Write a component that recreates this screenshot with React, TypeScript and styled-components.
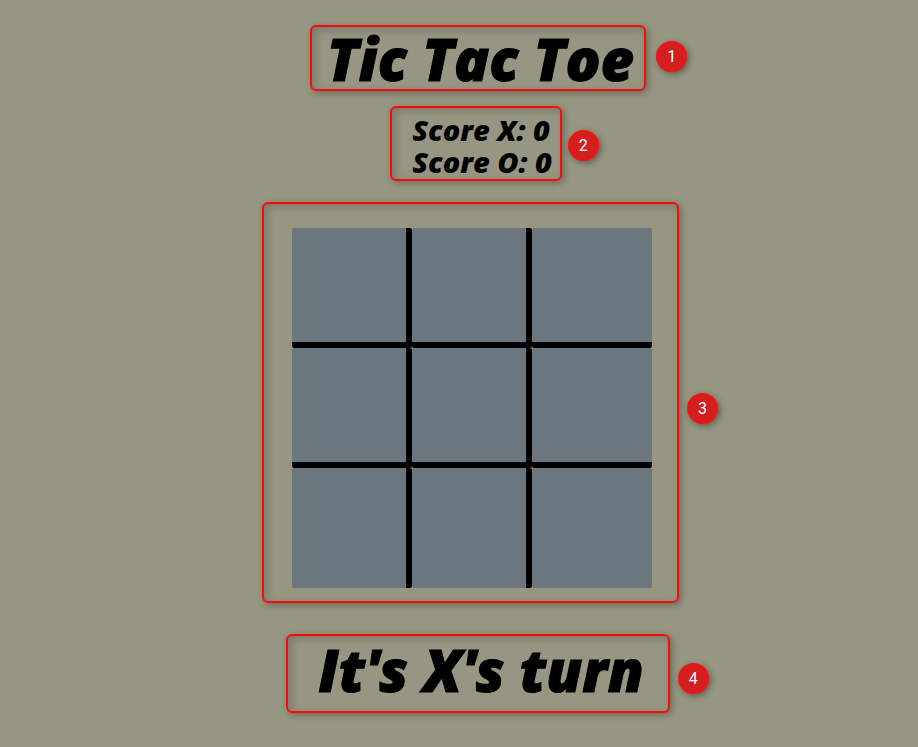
import React, { useState } from "react";
import styled, { createGlobalStyle } from "styled-components";

const GlobalStyle = createGlobalStyle`
  *, *::before, *::after { box-sizing: border-box; }
  body {
    margin: 0;
    background: #979682;
    color: #000;
    font-family: "Open Sans", "Noto Sans", sans-serif;
  }
`;

const Game = styled.main`
  display: flex;
  flex-direction: column;
  align-items: center;
  min-height: 100vh;
  padding: 25px 0 32px 38px;
`;

const Frame = styled.section<{ $pad: string; $after?: number; $shift?: number }>`
  position: relative;
  padding: ${(p) => p.$pad};
  margin-bottom: ${(p) => p.$after ?? 0}px;
  margin-right: ${(p) => p.$shift ?? 0}px;
  border: 2px solid #fb0a0a;
  border-radius: 6px;
  box-shadow: 2px 2px 7px rgba(0, 0, 0, 0.3), inset 3px 3px 8px rgba(0, 0, 0, 0.2);
`;

const Badge = styled.span<{ $top: number; $gap?: number }>`
  position: absolute;
  top: ${(p) => p.$top}px;
  left: calc(100% + ${(p) => p.$gap ?? 10}px);
  display: flex;
  align-items: center;
  justify-content: center;
  width: 31px;
  height: 31px;
  border: 2px solid #f51111;
  border-radius: 50%;
  background: #d31f1f;
  color: #fff;
  font: 400 16px/20px Roboto, sans-serif;
  box-shadow: 2px 2px 6px rgba(0, 0, 0, 0.4);
`;

const Display = styled.h1`
  margin: 0;
  font-size: 58px;
  font-style: italic;
  font-weight: 800;
  line-height: 60px;
  white-space: nowrap;
  -webkit-text-stroke: 1px #000;
`;

const Turn = styled(Display)`
  line-height: 67px;
`;

const Score = styled.p`
  margin: 0;
  font-size: 29px;
  font-style: italic;
  font-weight: 800;
  line-height: 32px;
  white-space: nowrap;
`;

const Board = styled.div`
  display: grid;
  grid-template-columns: repeat(3, 120px);
  grid-auto-rows: 120px;
`;

const Cell = styled.button<{ $right: boolean; $bottom: boolean }>`
  padding: 0;
  border: 0 solid #000;
  border-right-width: ${(p) => (p.$right ? 6 : 0)}px;
  border-bottom-width: ${(p) => (p.$bottom ? 6 : 0)}px;
  border-radius: 2px;
  background: #6c767e;
  color: #000;
  font: italic 800 72px/1 "Open Sans", sans-serif;
  cursor: pointer;
`;

const LINES = [
  [0, 1, 2], [3, 4, 5], [6, 7, 8],
  [0, 3, 6], [1, 4, 7], [2, 5, 8],
  [0, 4, 8], [2, 4, 6],
];

const EMPTY: string[] = Array(9).fill("");

export default function App() {
  const [cells, setCells] = useState(EMPTY);
  const [player, setPlayer] = useState("X");
  const [score, setScore] = useState<Record<string, number>>({ X: 0, O: 0 });

  const play = (index: number) => {
    if (cells[index]) return;
    const next = cells.map((c, i) => (i === index ? player : c));
    const won = LINES.some((line) => line.every((i) => next[i] === player));
    if (won) setScore({ ...score, [player]: score[player] + 1 });
    setCells(won || next.every(Boolean) ? EMPTY : next);
    setPlayer(player === "X" ? "O" : "X");
  };

  return (
    <>
      <GlobalStyle />
      <Game>
        <Frame $pad="2px 10px 0 15px" $after={15}>
          <Display>Tic Tac Toe</Display>
          <Badge $top={14} $gap={12}>1</Badge>
        </Frame>
        <Frame $pad="6px 8px 1px 20px" $after={21} $shift={4}>
          <Score>Score X: {score.X}</Score>
          <Score>Score O: {score.O}</Score>
          <Badge $top={22} $gap={8}>2</Badge>
        </Frame>
        <Frame $pad="24px 25px 13px 28px" $after={31} $shift={15}>
          <Board>
            {cells.map((mark, i) => (
              <Cell
                key={i}
                type="button"
                aria-label={`Cell ${i + 1} ${mark}`}
                $right={i % 3 < 2}
                $bottom={i < 6}
                onClick={() => play(i)}
              >
                {mark}
              </Cell>
            ))}
          </Board>
          <Badge $top={189}>3</Badge>
        </Frame>
        <Frame $pad="0 24px 8px 30px">
          <Turn as="h2">It's {player}'s turn</Turn>
          <Badge $top={27}>4</Badge>
        </Frame>
      </Game>
    </>
  );
}
